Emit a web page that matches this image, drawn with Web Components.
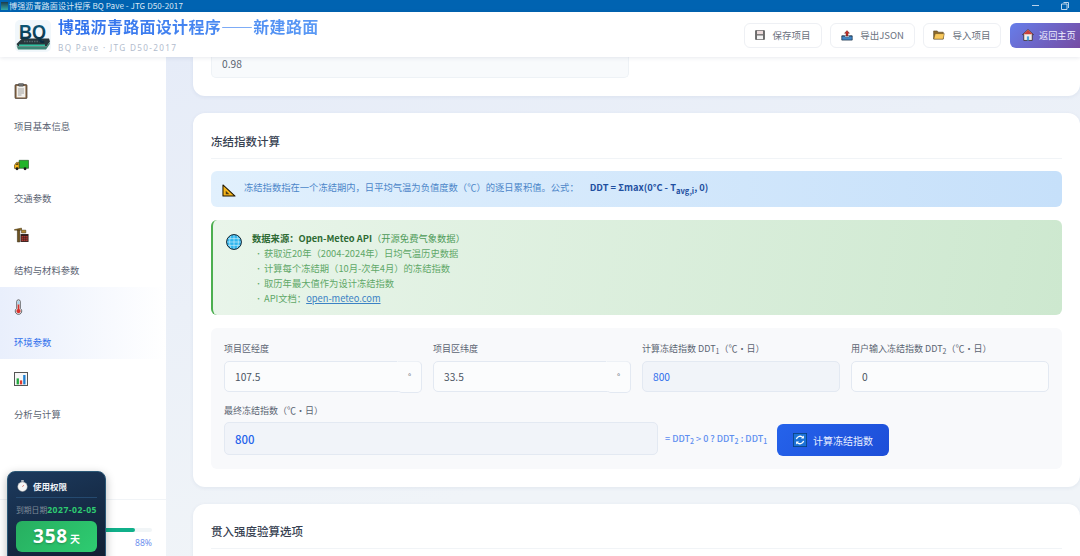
<!DOCTYPE html>
<html lang="zh"><head><meta charset="utf-8"><title>BQ Pave</title>
<style>
html,body{margin:0;padding:0;height:556px;width:1080px;overflow:hidden;background:#fff;font-family:"Noto Sans CJK SC","Noto Sans",sans-serif;}
app-root{display:flex;flex-direction:column;width:1080px;height:556px;overflow:hidden}
</style></head><body>
<app-root></app-root>

<template id="ic-clip"><svg viewBox="0 0 14 16" width="14" height="16"><rect x="1" y="1.6" width="12" height="14" rx="1" fill="#8a6a48" stroke="#3c3028" stroke-width=".7"/><rect x="2.6" y="3" width="8.8" height="11.4" fill="#f2f0ec"/><rect x="4.5" y="0.4" width="5" height="2.8" rx=".6" fill="#6f6f6f" stroke="#333" stroke-width=".4"/><path d="M4 6h6M4 8h6M4 10h6M4 12h3.5" stroke="#9a9a9a" stroke-width=".9"/></svg></template>
<template id="ic-truck"><svg viewBox="0 0 16 12" width="15" height="12" style="margin-top:3px"><path d="M5.5 1h10v8.5h-10z" fill="#22b42a" stroke="#123d14" stroke-width=".6"/><path d="M5.5 3.2H2.6L.5 6.2v3.4h5z" fill="#f4b41a" stroke="#3a2a00" stroke-width=".6"/><path d="M2.9 4.2h1.7v1.9H1.7z" fill="#5c4a1c"/><circle cx="3.2" cy="10" r="1.5" fill="#1a1a1a"/><circle cx="11.8" cy="10" r="1.5" fill="#1a1a1a"/></svg></template>
<template id="ic-crane"><svg viewBox="0 0 16 16" width="15" height="16"><path d="M.5 2.2 8 .6v2.2H.5z" fill="#a9802e" stroke="#2f2208" stroke-width=".5"/><path d="M3.6 2.6h2.6v12.8H3.6z" fill="#6f5420" stroke="#241a06" stroke-width=".5"/><path d="M8 2.8h4.6v3H8z" fill="#b58a35" stroke="#2f2208" stroke-width=".5"/><path d="M7 7h8.5v8.4H7z" fill="#2b1a18"/><path d="M8 9h6.6v5.5H8z" fill="#b03a32"/><path d="M8 10.8h6.6M8 12.6h6.6M10.2 9v5.5M12.4 9v5.5" stroke="#2b1a18" stroke-width=".5"/></svg></template>
<template id="ic-thermo"><svg viewBox="0 0 10 17" width="9" height="16"><path d="M3 2.5a2 2 0 0 1 4 0v7.6a3.6 3.6 0 1 1-4 0z" fill="#e9eef3" stroke="#333" stroke-width=".8"/><rect x="4.1" y="5.5" width="1.8" height="7" fill="#d9322b"/><circle cx="5" cy="13" r="2.4" fill="#d9322b"/><rect x="4.1" y="2" width="1.8" height="3.5" fill="#9fd4f0"/></svg></template>
<template id="ic-chart"><svg viewBox="0 0 14 14" width="14" height="14"><rect x=".5" y=".5" width="13" height="13" fill="#f7f7f7" stroke="#555" stroke-width="1"/><rect x="2.6" y="6.4" width="2.3" height="6" fill="#1fa83c"/><rect x="5.9" y="8.4" width="2.3" height="4" fill="#e0392d"/><rect x="9.2" y="3" width="2.3" height="9.4" fill="#1f7fd0"/></svg></template>
<template id="ic-rule"><svg viewBox="0 0 15 14" width="14" height="13"><path d="M1 1 14 13H1z" fill="#f5b51c" stroke="#1d1400" stroke-width="1.1" stroke-linejoin="round"/><path d="M4 7.2 8 11H4z" fill="#4c3a10"/></svg></template>
<template id="ic-globe"><svg viewBox="0 0 16 16" width="16" height="16"><circle cx="8" cy="8" r="7.4" fill="#2fb6ee" stroke="#10202c" stroke-width="1"/><path d="M1 8h14M2 4.6h12M2 11.4h12M8 1v14M4.8 1.8c-1.6 4-1.6 8.4 0 12.4M11.2 1.8c1.6 4 1.6 8.4 0 12.4" stroke="#d6f1fc" stroke-width=".6" fill="none"/></svg></template>
<template id="ic-sync"><svg viewBox="0 0 14 14" width="14" height="14"><rect width="14" height="14" fill="#0b3f80"/><rect x=".8" y=".8" width="12.4" height="12.4" fill="#1b72d6"/><path d="M3.4 6.2A3.8 3.8 0 0 1 10 4.6M10.6 7.8A3.8 3.8 0 0 1 4 9.4" stroke="#fff" stroke-width="1.3" fill="none"/><path d="M10.9 2.6v3H8zM3.1 11.4v-3H6z" fill="#fff"/></svg></template>
<template id="ic-watch"><svg viewBox="0 0 12 13" width="11" height="12"><rect x="4.6" y=".2" width="2.8" height="1.6" fill="#e5e5e5"/><circle cx="6" cy="7.3" r="5.2" fill="#f6f6f6" stroke="#999" stroke-width=".5"/><path d="M6 7.3 7.3 5.6" stroke="#c0392b" stroke-width=".8"/></svg></template>
<template id="ic-save"><svg viewBox="0 0 12 12" width="10" height="10"><rect x=".5" y=".5" width="11" height="11" rx=".7" fill="#6c6c6c" stroke="#333" stroke-width=".6"/><rect x="2.4" y="1" width="7.2" height="4" fill="#ecdcdc"/><rect x="2.4" y="6.6" width="7.2" height="4.4" fill="#f4f4f4"/></svg></template>
<template id="ic-out"><svg viewBox="0 0 13 12" width="12" height="11"><path d="M.8 6.4h11.4v4.6H.8z" fill="#3f86c8" stroke="#12263a" stroke-width=".7"/><path d="M.8 6.4h3l.8 1.4h3.8l.8-1.4h3" fill="#d8ecfa" stroke="#12263a" stroke-width=".5"/><path d="M6.5 .6 9.2 3.6H7.6v3H5.4v-3H3.8z" fill="#c22f2a" stroke="#42100e" stroke-width=".4"/></svg></template>
<template id="ic-folder"><svg viewBox="0 0 13 11" width="12" height="10"><path d="M.6 1h4l1 1.4h5.6V10H.6z" fill="#8b6a2e" stroke="#4b3a18" stroke-width=".6"/><path d="M2.4 4h10l-1.4 6H.8z" fill="#f8c85c" stroke="#6b5220" stroke-width=".5"/></svg></template>
<template id="ic-home"><svg viewBox="0 0 13 13" width="12" height="12"><path d="M6.5 .6 12.4 6h-1.3v6.4H1.9V6H.6z" fill="#f3efe9" stroke="#2a1a1a" stroke-width=".8"/><path d="M6.5 .8 11.6 5.6H1.4z" fill="#c8403a"/><rect x="5.3" y="8" width="2.4" height="4.4" fill="#4aa3d8"/></svg></template>

<script>
function ic(n){return document.getElementById('ic-'+n).innerHTML}
function def(name,css,html){
  customElements.define(name,class extends HTMLElement{
    connectedCallback(){ if(this.shadowRoot)return;
      const s=this.attachShadow({mode:'open'});
      s.innerHTML='<style>'+css+'</style>'+(typeof html==='function'?html(this):html);
    }
  });
}
def('title-bar',`:host{display:flex;align-items:center;height:12px;background:#0063b1;color:#dbe8f5;font-size:8.1px;line-height:12px;flex:none;padding-left:1px;position:relative}
 .i{width:7px;height:8px;background:linear-gradient(#1d3b4a,#3aa);margin-right:1px;flex:none}
 span.t{white-space:nowrap;letter-spacing:.06px}
 .sp{flex:1}.c{width:30px;display:flex;justify-content:center;align-items:center;height:12px}`,
 `<div class="i"></div><span class="t">博强沥青路面设计程序 BQ Pave - JTG D50-2017</span><div class="sp"></div>
 <div class="c"><svg width="7" height="2"><rect width="7" height="1" y="0" fill="#b9d2ea"/></svg></div>
 <div class="c"><svg width="8" height="8" viewBox="0 0 8 8"><path d="M2.5.5h5v5.5M.5 2h5.5v5.5H.5z" fill="none" stroke="#d2e2f2" stroke-width=".9"/></svg></div>`);

def('bq-logo',`:host{display:block;width:36px;height:32px;flex:none;margin-top:3px}svg{display:block}text{font-family:"Liberation Sans",sans-serif;font-weight:700}`,
 `<svg viewBox="0 0 36 32" width="36" height="32">
 <defs><linearGradient id="g" x1="0" y1="0" x2="0" y2="1"><stop offset="0" stop-color="#0f6284"/><stop offset="1" stop-color="#0b2a3c"/></linearGradient></defs>
 <rect x="0" y="0" width="36" height="32" rx="5" fill="#f1f7fb"/>
 <path d="M1.500 24 7 18.500h27l1 3-3.500 5H3z" fill="#27373c"/><path d="M1.500 25.500 3 29.500h28l3.800-5.500v-2l-3.500 4.500H3z" fill="#3d8574"/>
 <path d="M4 25.200h26" stroke="#35e0b6" stroke-width="1.300"/><path d="M9 21.500h20" stroke="#54666c" stroke-width="1.500" stroke-dasharray="1.500 1"/>
 <text x="4" y="18.500" font-size="20" fill="url(#g)" textLength="27" lengthAdjust="spacingAndGlyphs">BQ</text></svg>`);

def('top-btn',`:host{display:inline-flex;align-items:center;justify-content:center;height:25px;box-sizing:border-box;border:1px solid #eef0f4;border-radius:6px;background:#fff;color:#6b7280;font-size:9.5px;gap:7px;flex:none;white-space:nowrap}
 :host([primary]){background:linear-gradient(135deg,#667eea,#764ba2);border:0;color:#eef;border-radius:6px 0 0 6px;justify-content:flex-start;padding-left:12px;gap:5px;font-size:9.2px}
 svg{display:block}`,
 h=>ic(h.getAttribute('icon'))+'<slot></slot>');

def('app-header',`:host{display:flex;align-items:center;height:45px;background:#fff;flex:none;box-shadow:0 1px 4px rgba(30,50,90,.1);position:relative;z-index:5;padding-left:15px;box-sizing:border-box}
 .tx{margin-left:7px;margin-top:0}
 h1{margin:0;font-size:16px;font-weight:600;line-height:20px;letter-spacing:.3px;white-space:nowrap;background:linear-gradient(90deg,#2f6fec,#5b9af5);-webkit-background-clip:text;background-clip:text;color:transparent}
 .s{font-size:8.2px;color:#b2bccd;letter-spacing:1.33px;line-height:11px;margin-top:6px;white-space:nowrap;font-family:"Noto Sans","Noto Sans CJK SC",sans-serif}
 .sp{flex:1}.b{display:flex;gap:8px;margin-top:1px}`,
 `<bq-logo></bq-logo><div class="tx"><h1>博强沥青路面设计程序——新建路面</h1><div class="s">BQ Pave · JTG D50-2017</div></div><div class="sp"></div>
 <div class="b"><top-btn icon="save" style="width:78px">保存项目</top-btn><top-btn icon="out" style="width:85px">导出JSON</top-btn><top-btn icon="folder" style="width:78px">导入项目</top-btn><top-btn icon="home" primary style="width:70px;margin-left:1px">返回主页</top-btn></div>`);

def('nav-item',`:host{display:block;height:72px;box-sizing:border-box;padding:9px 14px 0;color:#5a6372;font-size:9.35px}
 :host([active]){background:linear-gradient(90deg,#e9effc,#fff);color:#2f6fec}
 .i{height:22px;display:flex;align-items:center}.l{margin-top:17px;line-height:14px;white-space:nowrap}svg{display:block}`,
 h=>`<div class="i">${ic(h.getAttribute('icon'))}</div><div class="l"><slot></slot></div>`);

def('quota-card',`:host{display:block;position:absolute;left:7px;top:471px;width:99px;height:100px;box-sizing:border-box;border:1px solid #2b5877;border-radius:8px;background:linear-gradient(160deg,#1c3a5e,#101c2e);box-shadow:0 3px 10px rgba(0,0,0,.28);padding:0 8px;color:#fff;z-index:4}
 .h{display:flex;align-items:center;height:26px;gap:5px;padding:3px 0 0 1px;box-sizing:border-box;font-size:8.5px;font-weight:700;color:#f0f4f8;border-bottom:1px solid #254a70}
 .d{display:flex;align-items:center;height:23px;font-size:7.8px;color:#7f8b99;white-space:nowrap}
 .d b{color:#2ecc71;font-weight:700;font-family:"Noto Sans",sans-serif;font-size:8.6px;letter-spacing:.5px}
 .p{height:31px;border-radius:6px;background:linear-gradient(135deg,#27ae60,#2ecc71);display:flex;align-items:baseline;justify-content:center;gap:2px;line-height:31px;font-weight:700}
 .p i{font-style:normal;font-family:"Noto Sans",sans-serif;font-size:19px;letter-spacing:.8px;text-shadow:0 1px 2px rgba(0,0,0,.25)}.p u{text-decoration:none;font-size:10px}`,
 `<div class="h">${ic('watch')}<span>使用权限</span></div><div class="d">到期日期<b>2027-02-05</b></div><div class="p"><i>358</i><u>天</u></div>`);

def('side-bar',`:host{display:flex;flex-direction:column;width:166px;flex:none;background:#fff;box-sizing:border-box;padding-top:14px;overflow:hidden}
 .sp{flex:1}.foot{height:57px;border-top:1px solid #f1f4f7;box-sizing:border-box;padding:28px 14px 0 14px;flex:none}
 .tr{height:4px;border-radius:2px;background:#f1f5f7;overflow:hidden}.tr div{height:4px;width:88%;background:#10b08a;border-radius:2px}
 .pc{font-size:8.6px;color:#6f92ee;text-align:right;line-height:12px;margin-top:5px;font-family:"Noto Sans",sans-serif}`,
 `<nav-item icon="clip">项目基本信息</nav-item><nav-item icon="truck">交通参数</nav-item><nav-item icon="crane">结构与材料参数</nav-item><nav-item icon="thermo" active>环境参数</nav-item><nav-item icon="chart">分析与计算</nav-item><div class="sp"></div><div class="foot"><div class="tr"><div></div></div><div class="pc">88%</div></div>`);

def('info-card',`:host{display:block;background:#fff;border-radius:12px;box-shadow:0 1px 4px rgba(30,60,110,.07);box-sizing:border-box;padding:18px 18px 18px;flex:none}
 :host([clipped]){border-radius:0 0 12px 12px;padding:0 18px 18px}
 :host([tight]){padding-top:17px}
 h2{margin:0 0 12px;font-size:11.5px;font-weight:500;line-height:20px;color:#374151;padding-bottom:7px;border-bottom:1px solid #f1f4f7}
 h2:empty{display:none}`,
 h=>`<h2>${h.getAttribute('heading')||''}</h2><slot></slot>`);

def('blue-note',`:host{display:flex;align-items:center;height:36px;box-sizing:border-box;border-radius:6px;background:linear-gradient(90deg,#e1f0fd,#c6e0fa);padding:0 11px 4px;color:#4c86c9;font-size:9.3px;white-space:nowrap;margin-bottom:13px}
 svg{display:block;margin-right:8px;margin-top:7px}b{color:#1e4fa0;font-weight:600;margin-left:11px;font-size:9.3px}sub{font-size:7.6px;vertical-align:-3px;line-height:0}`,
 ()=>`${ic('rule')}<span>冻结指数指在一个冻结期内，日平均气温为负值度数（℃）的逐日累积值。公式：</span><b>DDT = Σmax(0°C - T<sub>avg,i</sub>, 0)</b>`);

def('green-note',`:host{display:flex;height:95px;box-sizing:border-box;border-radius:6px;border-left:2.5px solid #4caf50;background:linear-gradient(100deg,#e9f5ea,#cde8cf);padding:11px 13px 0;color:#5fa868;font-size:9.3px;line-height:15px;margin-bottom:13px}
 svg{display:block;margin-top:3px;margin-right:10px;flex:none}
 .t{color:#2e6b34;white-space:nowrap}.t b{font-weight:600}.t span{color:#4d9a57;font-weight:400}
 ul{list-style:none;margin:0;padding:0 0 0 3px}li{white-space:nowrap}li:before{content:"•";display:inline-block;width:9px;font-size:7px;vertical-align:1px}
 a{color:#3b82c4;text-decoration:underline}`,
 ()=>`${ic('globe')}<div><div class="t"><b>数据来源：Open-Meteo API</b><span>（开源免费气象数据）</span></div><ul><li>获取近20年（2004-2024年）日均气温历史数据</li><li>计算每个冻结期（10月-次年4月）的冻结指数</li><li>取历年最大值作为设计冻结指数</li><li>API文档：<a href="#">open-meteo.com</a></li></ul></div>`);

def('form-field',`:host{display:block;min-width:0}
 label{display:block;font-size:9px;line-height:14px;color:#5b6472;white-space:nowrap;margin-bottom:5px}
 :host([big]) label{margin-bottom:4px}
 sub{font-size:7px;vertical-align:-2px;line-height:0}
 .box{position:relative;height:31px;box-sizing:border-box;border:1px solid #e3e9f2;border-radius:5px;background:#fbfcfd;display:flex;align-items:center;padding:0 10px;font-size:10.2px;color:#4b5563}
 :host([ro]) .box{background:#f1f4f9;color:#2f6fec}
 :host([big]) .box{height:33px;font-size:11.4px;font-weight:500;color:#2563eb}
 .u{position:absolute;right:-1px;top:-1px;width:25px;height:32px;box-sizing:border-box;border:1px solid #e3e9f2;border-top-color:#edf1f6;border-left-color:transparent;border-radius:0 5px 5px 5px;background:#fbfcfd;font-size:8.5px;color:#6b7280;display:flex;align-items:center;justify-content:center;padding-bottom:3px}`,
 h=>`<label>${h.getAttribute('label')}</label><div class="box">${h.getAttribute('value')}${h.hasAttribute('unit')?`<div class="u">°</div>`:''}</div>`);

def('calc-btn',`:host{display:inline-flex;align-items:center;justify-content:center;width:112px;height:32px;box-sizing:border-box;border-radius:6px;background:linear-gradient(135deg,#2563eb,#1d4ed8);color:#e8efff;font-size:10px;gap:6px;flex:none;white-space:nowrap;margin-bottom:-1px}svg{display:block}`,
 ()=>`${ic('sync')}<slot></slot>`);

def('freeze-form',`:host{display:block;background:#f8f9fb;border-radius:6px;padding:14px 13px 13px;box-sizing:border-box;height:141px}
 .g{display:grid;grid-template-columns:repeat(4,198px);column-gap:11px}
 .r{display:flex;align-items:flex-end;margin-top:12px}
 .r form-field{width:434px;flex:none}
 .f{font-size:9px;color:#5f8ff0;font-weight:500;white-space:nowrap;width:119px;flex:none;box-sizing:border-box;padding-left:7px;line-height:33px}
 sub{font-size:7px;vertical-align:-2px;line-height:0}`,
 `<div class="g"><form-field label="项目区经度" value="107.5" unit></form-field><form-field label="项目区纬度" value="33.5" unit></form-field><form-field ro label="计算冻结指数 DDT<sub>1</sub>（℃・日）" value="800"></form-field><form-field label="用户输入冻结指数 DDT<sub>2</sub>（℃・日）" value="0"></form-field></div>
 <div class="r"><form-field ro big label="最终冻结指数（℃・日）" value="800"></form-field><span class="f">= DDT<sub>2</sub> &gt; 0 ? DDT<sub>2</sub> : DDT<sub>1</sub></span><calc-btn>计算冻结指数</calc-btn></div>`);

def('old-value',`:host{display:block;height:21px;box-sizing:border-box;background:#f8fafc;border:1px solid #eef2f6;border-top:0;border-radius:0 0 5px 5px;padding:0 10px;font-size:10.2px;line-height:13px;color:#5b6472;width:418px}`,`<slot></slot>`);

def('main-pane',`:host{display:flex;flex-direction:column;flex:1;min-width:0;gap:17px;padding:0 0 0 27px;background:linear-gradient(165deg,#e6ecf8,#f0f4f8 70%);overflow:hidden}`,
 `<info-card clipped><old-value>0.98</old-value></info-card>
 <info-card heading="冻结指数计算"><blue-note></blue-note><green-note></green-note><freeze-form></freeze-form></info-card>
 <info-card tight heading="贯入强度验算选项"></info-card>`);

customElements.define('app-root',class extends HTMLElement{
 connectedCallback(){const s=this.attachShadow({mode:'open'});
 s.innerHTML=`<style>:host{display:flex;flex-direction:column;width:1080px;height:556px;overflow:hidden;position:relative;font-family:"Noto Sans CJK SC","Noto Sans",sans-serif}.b{display:flex;flex:1;min-height:0}</style><title-bar></title-bar><app-header></app-header><div class="b"><side-bar></side-bar><main-pane></main-pane></div><quota-card></quota-card>`;}
});
</script>
</body></html>
